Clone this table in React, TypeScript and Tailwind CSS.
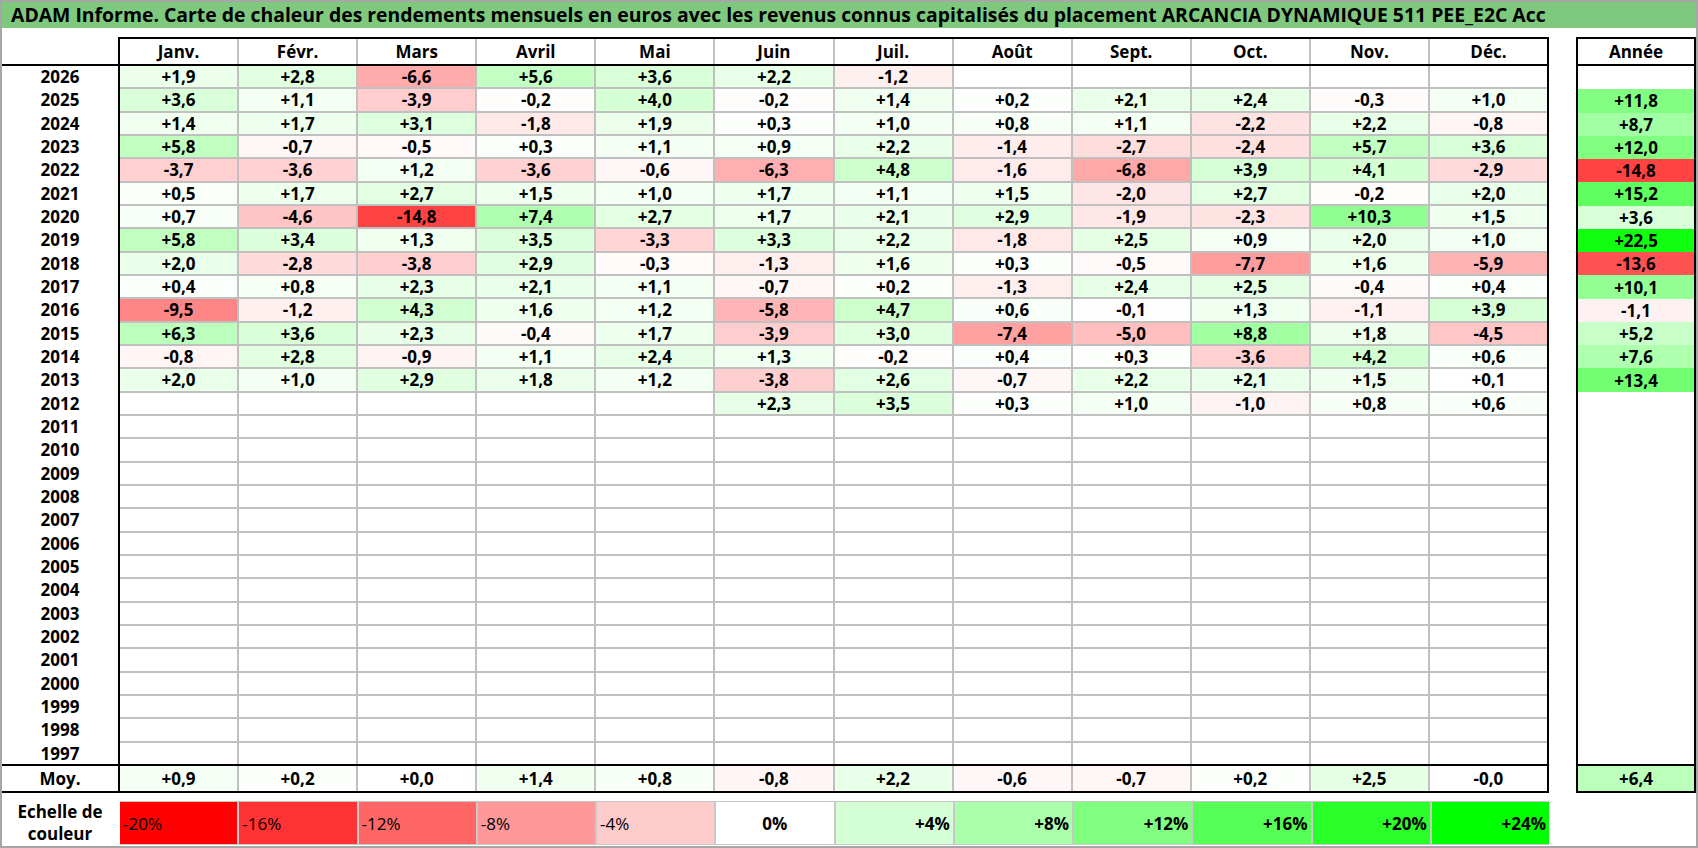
import React from "react"

const MONTHS = ["Janv.", "Févr.", "Mars", "Avril", "Mai", "Juin", "Juil.", "Août", "Sept.", "Oct.", "Nov.", "Déc."]

// year -> 12 monthly values + yearly total ("" = no data)
const ROWS: [number, string[], string][] = [
    [2026, ["+1,9", "+2,8", "-6,6", "+5,6", "+3,6", "+2,2", "-1,2", "", "", "", "", ""], ""],
    [2025, ["+3,6", "+1,1", "-3,9", "-0,2", "+4,0", "-0,2", "+1,4", "+0,2", "+2,1", "+2,4", "-0,3", "+1,0"], "+11,8"],
    [2024, ["+1,4", "+1,7", "+3,1", "-1,8", "+1,9", "+0,3", "+1,0", "+0,8", "+1,1", "-2,2", "+2,2", "-0,8"], "+8,7"],
    [2023, ["+5,8", "-0,7", "-0,5", "+0,3", "+1,1", "+0,9", "+2,2", "-1,4", "-2,7", "-2,4", "+5,7", "+3,6"], "+12,0"],
    [2022, ["-3,7", "-3,6", "+1,2", "-3,6", "-0,6", "-6,3", "+4,8", "-1,6", "-6,8", "+3,9", "+4,1", "-2,9"], "-14,8"],
    [2021, ["+0,5", "+1,7", "+2,7", "+1,5", "+1,0", "+1,7", "+1,1", "+1,5", "-2,0", "+2,7", "-0,2", "+2,0"], "+15,2"],
    [2020, ["+0,7", "-4,6", "-14,8", "+7,4", "+2,7", "+1,7", "+2,1", "+2,9", "-1,9", "-2,3", "+10,3", "+1,5"], "+3,6"],
    [2019, ["+5,8", "+3,4", "+1,3", "+3,5", "-3,3", "+3,3", "+2,2", "-1,8", "+2,5", "+0,9", "+2,0", "+1,0"], "+22,5"],
    [2018, ["+2,0", "-2,8", "-3,8", "+2,9", "-0,3", "-1,3", "+1,6", "+0,3", "-0,5", "-7,7", "+1,6", "-5,9"], "-13,6"],
    [2017, ["+0,4", "+0,8", "+2,3", "+2,1", "+1,1", "-0,7", "+0,2", "-1,3", "+2,4", "+2,5", "-0,4", "+0,4"], "+10,1"],
    [2016, ["-9,5", "-1,2", "+4,3", "+1,6", "+1,2", "-5,8", "+4,7", "+0,6", "-0,1", "+1,3", "-1,1", "+3,9"], "-1,1"],
    [2015, ["+6,3", "+3,6", "+2,3", "-0,4", "+1,7", "-3,9", "+3,0", "-7,4", "-5,0", "+8,8", "+1,8", "-4,5"], "+5,2"],
    [2014, ["-0,8", "+2,8", "-0,9", "+1,1", "+2,4", "+1,3", "-0,2", "+0,4", "+0,3", "-3,6", "+4,2", "+0,6"], "+7,6"],
    [2013, ["+2,0", "+1,0", "+2,9", "+1,8", "+1,2", "-3,8", "+2,6", "-0,7", "+2,2", "+2,1", "+1,5", "+0,1"], "+13,4"],
    [2012, ["", "", "", "", "", "+2,3", "+3,5", "+0,3", "+1,0", "-1,0", "+0,8", "+0,6"], ""],
]
for (let y = 2011; y >= 1997; y--) ROWS.push([y, Array(12).fill(""), ""])

const AVG = ["+0,9", "+0,2", "+0,0", "+1,4", "+0,8", "-0,8", "+2,2", "-0,6", "-0,7", "+0,2", "+2,5", "-0,0"]
const AVG_YEAR = "+6,4"
const SCALE = [-20, -16, -12, -8, -4, 0, 4, 8, 12, 16, 20, 24]

function heat(v: number | null) {
    if (v === null || isNaN(v)) return "#ffffff"
    if (v < 0) {
        const c = Math.round(255 * (1 - Math.min(1, -v / 20)))
        return `rgb(255,${c},${c})`
    }
    const c = Math.round(255 * (1 - Math.min(1, v / 24)))
    return `rgb(${c},255,${c})`
}

const num = (s: string) => (s ? parseFloat(s.replace(",", ".")) : null)

export default function App() {
    return (
        <div className="w-[1698px] h-[848px] border-2 border-[#a6a6a6] bg-white text-black font-['Open_Sans','Noto_Sans',sans-serif] overflow-hidden">
            {/* Title */}
            <div className="h-[26px] bg-[#7ec97e] flex items-center pl-[9px] text-[19.4px] font-bold leading-none whitespace-nowrap">
                ADAM Informe. Carte de chaleur des rendements mensuels en euros avec les revenus connus capitalisés du placement ARCANCIA DYNAMIQUE 511 PEE_E2C Acc
            </div>

            <div className="mt-[9px] flex text-[17px] font-bold leading-none">
                {/* Monthly table */}
                <div className="w-[1547px] flex flex-col">
                    {/* Header */}
                    <div className="h-[29px] flex border-b-2 border-black">
                        <div className="w-[116px]" />
                        <div className="flex-1 border-2 border-b-0 border-black grid grid-cols-12 gap-x-[2px] bg-[#c0c0c0]">
                            {MONTHS.map((m) => (
                                <div key={m} className="bg-white flex items-center justify-center">
                                    {m}
                                </div>
                            ))}
                        </div>
                    </div>

                    {/* Body */}
                    <div className="h-[698px] flex">
                        <div className="w-[116px] grid grid-rows-[repeat(30,minmax(0,1fr))] gap-y-[2px]">
                            {ROWS.map(([y]) => (
                                <div key={y} className="flex items-center justify-center">
                                    {y}
                                </div>
                            ))}
                        </div>
                        <div className="flex-1 border-x-2 border-black grid grid-cols-12 grid-rows-[repeat(30,minmax(0,1fr))] gap-[2px] bg-[#c0c0c0]">
                            {ROWS.flatMap(([y, vals]) =>
                                vals.map((v, i) => (
                                    <div
                                        key={`${y}-${i}`}
                                        className="flex items-center justify-center"
                                        style={{ backgroundColor: heat(num(v)) }}
                                    >
                                        {v}
                                    </div>
                                )),
                            )}
                        </div>
                    </div>

                    {/* Averages */}
                    <div className="h-[29px] flex border-y-2 border-black">
                        <div className="w-[116px] flex items-center justify-center">Moy.</div>
                        <div className="flex-1 border-x-2 border-black grid grid-cols-12 gap-x-[2px] bg-[#c0c0c0]">
                            {AVG.map((v, i) => (
                                <div
                                    key={i}
                                    className="flex items-center justify-center"
                                    style={{ backgroundColor: heat(num(v)) }}
                                >
                                    {v}
                                </div>
                            ))}
                        </div>
                    </div>

                    {/* Colour scale */}
                    <div className="mt-[8px] h-[44px] flex">
                        <div className="w-[116px] flex flex-col items-center justify-center leading-[22px]">
                            <span>Echelle de</span>
                            <span>couleur</span>
                        </div>
                        <div className="flex-1 ml-[2px] grid grid-cols-12 gap-x-[2px] bg-[#c8c8c8] border-y border-[#c8c8c8]">
                            {SCALE.map((p) => (
                                <div
                                    key={p}
                                    className={
                                        p < 0
                                            ? "flex items-center justify-start px-[3px] font-normal"
                                            : p === 0
                                              ? "flex items-center justify-center"
                                              : "flex items-center justify-end px-[3px]"
                                    }
                                    style={{ backgroundColor: heat(p) }}
                                >
                                    {p > 0 ? `+${p}%` : `${p}%`}
                                </div>
                            ))}
                        </div>
                    </div>
                </div>

                {/* Yearly column */}
                <div className="ml-[27px] w-[120px] flex flex-col">
                    <div className="h-[29px] border-2 border-black flex items-center justify-center">Année</div>
                    <div className="h-[698px] border-x-2 border-black grid grid-rows-[repeat(30,minmax(0,1fr))]">
                        {ROWS.map(([y, , total]) => (
                            <div
                                key={y}
                                className="flex items-center justify-center"
                                style={{ backgroundColor: heat(num(total)) }}
                            >
                                {total}
                            </div>
                        ))}
                    </div>
                    <div
                        className="h-[29px] border-2 border-black flex items-center justify-center"
                        style={{ backgroundColor: heat(num(AVG_YEAR)) }}
                    >
                        {AVG_YEAR}
                    </div>
                </div>
            </div>
        </div>
    )
}
